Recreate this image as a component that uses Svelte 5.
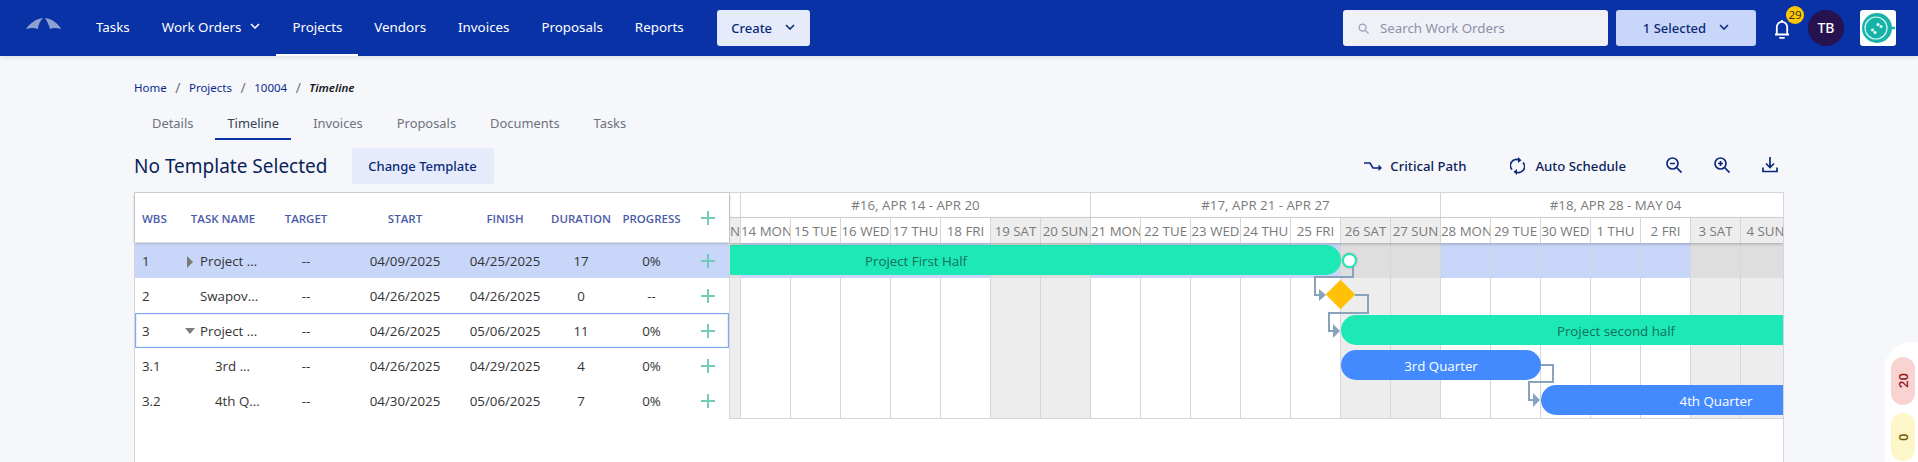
<script>
	const links = ['Tasks', 'Work Orders', 'Projects', 'Vendors', 'Invoices', 'Proposals', 'Reports'];
	const tabs = ['Details', 'Timeline', 'Invoices', 'Proposals', 'Documents', 'Tasks'];
	const crumbs = ['Home', 'Projects', '10004'];

	const tasks = [
		{ wbs: '1', name: 'Project ...', start: '04/09/2025', finish: '04/25/2025', duration: 17, progress: '0%', kind: 'closed' },
		{ wbs: '2', name: 'Swapov...', start: '04/26/2025', finish: '04/26/2025', duration: 0, progress: '--', kind: 'leaf' },
		{ wbs: '3', name: 'Project ...', start: '04/26/2025', finish: '05/06/2025', duration: 11, progress: '0%', kind: 'open' },
		{ wbs: '3.1', name: '3rd ...', start: '04/26/2025', finish: '04/29/2025', duration: 4, progress: '0%', kind: 'child' },
		{ wbs: '3.2', name: '4th Q...', start: '04/30/2025', finish: '05/06/2025', duration: 7, progress: '0%', kind: 'child' }
	];

	const weeks = ['#16, APR 14 - APR 20', '#17, APR 21 - APR 27', '#18, APR 28 - MAY 04'];
	const days = [
		'14 MON', '15 TUE', '16 WED', '17 THU', '18 FRI', '19 SAT', '20 SUN',
		'21 MON', '22 TUE', '23 WED', '24 THU', '25 FRI', '26 SAT', '27 SUN',
		'28 MON', '29 TUE', '30 WED', '1 THU', '2 FRI', '3 SAT', '4 SUN'
	];
	const isWeekend = (d) => d.includes('SAT') || d.includes('SUN');

	// day 0 is Apr 14, the first full column of the chart
	const dayW = 50;
	const origin = 11;
	const bars = [
		{ label: 'Project First Half', day: -5, len: 17, row: 0, kind: 'green' },
		{ label: 'Project second half', day: 12, len: 11, row: 2, kind: 'green' },
		{ label: '3rd Quarter', day: 12, len: 4, row: 3, kind: 'blue' },
		{ label: '4th Quarter', day: 16, len: 7, row: 4, kind: 'blue' }
	];
</script>

<header class="nav">
	<div class="brand">
		<svg width="36" height="12" viewBox="0 0 36 12" fill="#8fa1d1">
			<path d="M0 11 C4 5 10 1 17 0 C14 3 12 7 12 11 C8 9.500 4 10 0 11Z" />
			<path d="M19 0 C26 1 32 5 35 11 C31 10 27 9.500 24 11 C23 7 21 3 19 0Z" />
		</svg>
	</div>
	{#each links as link}
		<a class="link" class:active={link === 'Projects'} href="#top">
			{link}
			{#if link === 'Work Orders'}
				<svg class="chev" width="10" height="6" viewBox="0 0 10 6"><path d="M1 1l4 4 4-4" /></svg>
			{/if}
		</a>
	{/each}
	<button class="create">
		Create
		<svg class="chev" width="10" height="6" viewBox="0 0 10 6"><path d="M1 1l4 4 4-4" /></svg>
	</button>

	<div class="nav-right">
		<label class="search">
			<svg width="11" height="11" viewBox="0 0 12 12" fill="none" stroke="#9a9fb5" stroke-width="1.400">
				<circle cx="5" cy="5" r="3.800" /><path d="M8 8l3.500 3.500" />
			</svg>
			<span>Search Work Orders</span>
		</label>
		<button class="selected">
			1 Selected
			<svg class="chev" width="10" height="6" viewBox="0 0 10 6"><path d="M1 1l4 4 4-4" /></svg>
		</button>
		<div class="bell">
			<svg width="16" height="20" viewBox="0 0 16 20" fill="none" stroke="#fff" stroke-width="1.800">
				<path d="M1 15.500h14M2.800 15.500V8a5.200 5.200 0 0 1 10.400 0v7.500" />
				<path d="M6 18.800h4" stroke-linecap="round" />
				<path d="M8 1v1.500" />
			</svg>
			<span class="badge">29</span>
		</div>
		<div class="avatar">TB</div>
		<div class="tile">
			<svg width="36" height="36" viewBox="0 0 36 36" fill="none">
				<path d="M29 18h6" stroke="#17b3a8" stroke-width="2.500" />
				<circle cx="17" cy="18" r="15" fill="#17b3a8" />
				<circle cx="16" cy="18" r="11" stroke="#d8f7f3" stroke-width="1.200" />
				<circle cx="18" cy="14.500" r="1.500" fill="#f2fffd" />
				<circle cx="21" cy="16.500" r="1.500" fill="#f2fffd" />
				<circle cx="12.500" cy="20" r="1.500" fill="#f2fffd" />
				<circle cx="15" cy="22.500" r="1.500" fill="#f2fffd" />
			</svg>
		</div>
	</div>
</header>

<main class="page">
	<nav class="crumbs">
		{#each crumbs as crumb}
			<a href="#top">{crumb}</a><span class="sep">/</span>
		{/each}
		<em>Timeline</em>
	</nav>

	<div class="tabs">
		{#each tabs as tab}
			<span class="tab" class:current={tab === 'Timeline'}>{tab}</span>
		{/each}
	</div>

	<div class="titlebar">
		<h1>No Template Selected</h1>
		<button class="change">Change Template</button>
		<div class="tools">
			<span class="tool">
				<svg width="19" height="10" viewBox="0 0 19 10" fill="none" stroke="#0b2a78" stroke-width="1.600">
					<path d="M0 2h6l3 5h8" /><path d="M14.500 3.500L18 7l-3.500 3" fill="#0b2a78" stroke="none" />
				</svg>
				Critical Path
			</span>
			<span class="tool sched">
				<svg width="15" height="18" viewBox="0 0 15 18" fill="none" stroke="#0b2a78" stroke-width="1.700">
					<path d="M2 12.500A6 6 0 0 1 9.500 3.300" />
					<path d="M13 5.500A6 6 0 0 1 5.500 14.700" />
					<path d="M8 0l3.500 3.200L8 6" fill="#0b2a78" stroke="none" />
					<path d="M7 12l-3.500 2.800L7 18" fill="#0b2a78" stroke="none" />
				</svg>
				Auto Schedule
			</span>
			<svg class="icon" width="16" height="16" viewBox="0 0 16 16" fill="none" stroke="#0b2a78" stroke-width="1.700">
				<circle cx="6.500" cy="6.500" r="5.500" /><path d="M10.500 10.500L15.500 15.500M4 6.500h5" />
			</svg>
			<svg class="icon" width="16" height="16" viewBox="0 0 16 16" fill="none" stroke="#0b2a78" stroke-width="1.700">
				<circle cx="6.500" cy="6.500" r="5.500" /><path d="M10.500 10.500L15.500 15.500M4 6.500h5M6.500 4v5" />
			</svg>
			<svg class="icon last" width="16" height="16" viewBox="0 0 16 16" fill="none" stroke="#0b2a78" stroke-width="1.700">
				<path d="M8 0v10M4 6.500L8 10.500l4-4M1 10.500v4h14v-4" />
			</svg>
		</div>
	</div>

	<section class="gantt">
		<div class="pane">
			<div class="row head">
				<span class="wbs">WBS</span>
				<span class="mid">TASK NAME</span>
				<span class="mid">TARGET</span>
				<span class="mid">START</span>
				<span class="mid">FINISH</span>
				<span class="mid">DURATION</span>
				<span class="mid">PROGRESS</span>
				<span class="plus"></span>
			</div>
			{#each tasks as task, i}
				<div class="row" class:picked={i === 0} class:focused={i === 2}>
					<span class="wbs">{task.wbs}</span>
					<span class="name {task.kind}">
						{#if task.kind === 'closed' || task.kind === 'open'}<i class="caret"></i>{/if}
						{task.name}
					</span>
					<span class="mid">--</span>
					<span class="mid">{task.start}</span>
					<span class="mid">{task.finish}</span>
					<span class="mid">{task.duration}</span>
					<span class="mid">{task.progress}</span>
					<span class="plus"></span>
				</div>
			{/each}
		</div>

		<div class="chart">
			<div class="weeks">
				<span class="stub"></span>
				{#each weeks as week}
					<span class="week">{week}</span>
				{/each}
			</div>
			<div class="days">
				<span class="day stub off"><b>13 SUN</b></span>
				{#each days as day}
					<span class="day" class:off={isWeekend(day)}>{day}</span>
				{/each}
			</div>
			<div class="canvas">
				<div class="col stub off">
					{#each tasks as _, i}<span class:on={i === 0}></span>{/each}
				</div>
				{#each days as day}
					<div class="col" class:off={isWeekend(day)}>
						{#each tasks as _, i}<span class:on={i === 0}></span>{/each}
					</div>
				{/each}

				{#each bars as bar}
					<div
						class="bar {bar.kind}"
						style="left: {origin + bar.day * dayW}px; width: {bar.len * dayW}px; top: {2 + bar.row * 35}px"
					>
						{bar.label}
					</div>
				{/each}

				<span class="knob"></span>
				<span class="mile"></span>
				<svg class="links" width="1054" height="175" viewBox="0 0 1054 175" fill="none">
					<g stroke="#8aa3bd" stroke-width="2">
						<path d="M623 24v10H585v18h5" />
						<path d="M625 52h13v18H599v18h5" />
						<path d="M811 122h12v17H799v18h4" />
					</g>
					<g fill="#8aa3bd">
						<path d="M589 46l7 6-7 6z" />
						<path d="M603 81l7 7-7 7z" />
						<path d="M803 150l7 7-7 7z" />
					</g>
				</svg>
			</div>
		</div>
	</section>
</main>

<aside class="counts">
	<span class="count red">20</span>
	<span class="count yellow">0</span>
</aside>

<style>
	:global(body) {
		margin: 0;
		height: 462px;
		overflow: hidden;
		background: #f6f7fb;
		font-family: 'Noto Sans', sans-serif;
	}

	button {
		font: inherit;
		border: 0;
		cursor: pointer;
	}

	a {
		text-decoration: none;
		color: inherit;
	}

	.nav {
		display: flex;
		align-items: center;
		height: 56px;
		padding-right: 22px;
		background: #0832a5;
		box-shadow: 0 1px 5px rgba(0, 0, 0, 0.12);
		font-size: 13.350px;
		position: relative;
		z-index: 2;
	}

	.brand {
		width: 80px;
		padding: 0 0 6px 26px;
		box-sizing: border-box;
	}

	.link {
		display: flex;
		align-items: center;
		gap: 9px;
		height: 56px;
		padding: 0 16px;
		box-sizing: border-box;
		color: #fff;
		border-bottom: 2px solid transparent;
	}

	.link.active {
		border-bottom-color: #fff;
	}

	.chev {
		fill: none;
		stroke: currentColor;
		stroke-width: 1.600;
		margin-top: -2px;
	}

	.create {
		display: flex;
		align-items: center;
		justify-content: center;
		gap: 13px;
		width: 93px;
		height: 36px;
		margin-left: 17px;
		border-radius: 3px;
		background: #e6ebfc;
		color: #0b2a78;
		font-weight: 500;
		font-size: 13px;
	}

	.nav-right {
		display: flex;
		align-items: center;
		margin-left: auto;
	}

	.search {
		display: flex;
		align-items: center;
		gap: 11px;
		width: 265px;
		height: 36px;
		padding-left: 15px;
		box-sizing: border-box;
		border-radius: 3px;
		background: #f0f1f8;
		color: #8c90a8;
		font-size: 13.300px;
	}

	.selected {
		display: flex;
		align-items: center;
		justify-content: center;
		gap: 13px;
		width: 140px;
		height: 36px;
		margin-left: 8px;
		border-radius: 3px;
		background: #c8d6f9;
		color: #0b2a78;
		font-weight: 500;
		font-size: 13px;
	}

	.bell {
		position: relative;
		width: 16px;
		height: 20px;
		margin: 0 18px;
		top: 1px;
	}

	.badge {
		position: absolute;
		left: 12px;
		top: -13px;
		width: 18px;
		height: 18px;
		border-radius: 50%;
		background: #ffc800;
		color: #333;
		font-size: 11.500px;
		line-height: 18px;
		text-align: center;
	}

	.avatar {
		width: 36px;
		height: 36px;
		border-radius: 50%;
		background: #26124f;
		color: #fff;
		font-weight: 500;
		font-size: 14px;
		line-height: 36px;
		text-align: center;
	}

	.tile {
		width: 36px;
		height: 36px;
		margin-left: 16px;
		border-radius: 3px;
		background: #fff;
	}

	.page {
		padding: 23px 134px 0;
	}

	.crumbs {
		display: flex;
		align-items: center;
		height: 16px;
		font-size: 11.500px;
		color: #0b2a8f;
	}

	.sep {
		margin: 0 8.500px;
		font-size: 14px;
		color: #6d7280;
	}

	.crumbs em {
		font-weight: 600;
		color: #14161c;
	}

	.tabs {
		display: flex;
		height: 29px;
		margin-top: 16px;
		padding-left: 6px;
		font-size: 12.900px;
		color: #6d7280;
	}

	.tab {
		height: 27px;
		line-height: 24px;
		padding: 0 12px;
		margin-right: 10px;
		border-bottom: 2px solid transparent;
	}

	.tab.current {
		color: #374151;
		border-bottom-color: #0832a5;
	}

	.titlebar {
		display: flex;
		align-items: center;
		height: 36px;
		margin-top: 8px;
	}

	h1 {
		margin: 0;
		font-size: 19px;
		font-weight: 400;
		color: #0b2358;
	}

	.change {
		height: 36px;
		width: 142px;
		margin-left: 24px;
		border-radius: 3px;
		background: #e6ebfc;
		color: #0b2a78;
		font-weight: 500;
		font-size: 13px;
	}

	.tools {
		display: flex;
		align-items: center;
		margin-left: auto;
		padding-right: 6px;
		color: #0b2358;
		font-weight: 500;
		font-size: 13.200px;
	}

	.tool {
		display: flex;
		align-items: center;
		gap: 7px;
		margin-right: 44px;
	}

	.tool.sched {
		gap: 10px;
		margin-right: 40px;
	}

	.icon {
		margin-left: 32px;
		margin-top: -2px;
	}

	.icon.last {
		margin-left: 32px;
	}

	.tool + .icon {
		margin-left: 0;
	}

	.gantt {
		display: flex;
		height: 270px;
		margin-top: 8px;
		background: #fff;
		border: 1px solid #d6d6d6;
		border-bottom: 0;
		font-family: 'Open Sans', sans-serif;
		font-size: 13.300px;
		color: #333;
	}

	.pane {
		width: 594px;
		flex: none;
	}

	.row {
		display: grid;
		grid-template-columns: 40px 96px 70px 128px 72px 80px 61px 47px;
		align-items: center;
		height: 35px;
		box-sizing: border-box;
	}

	.row.head {
		height: 49px;
		padding-top: 1px;
		font-size: 11.500px;
		font-weight: 600;
		color: #4b5aa7;
		box-shadow: 0 1px 3px rgba(0, 0, 0, 0.25);
		position: relative;
	}

	.row.picked {
		background: #c8d6f9;
		margin-top: 1px;
	}

	.row.focused {
		outline: 1px solid #7fa9f5;
		outline-offset: -1px;
		box-shadow: inset 0 0 0 2px #e6efff;
	}

	.wbs {
		padding-left: 7px;
	}

	.mid {
		text-align: center;
	}

	.name {
		display: flex;
		align-items: center;
		padding-left: 25px;
		position: relative;
	}

	.name.child {
		padding-left: 40px;
	}

	.caret {
		position: absolute;
		left: 12px;
		top: 4px;
		width: 0;
		height: 0;
		border-style: solid;
		border-width: 6px 0 6px 6px;
		border-color: transparent transparent transparent #7b7b7b;
	}

	.open .caret {
		left: 10px;
		top: 6px;
		border-width: 6px 5px 0;
		border-color: #7b7b7b transparent transparent;
	}

	.plus {
		position: relative;
		height: 14px;
		margin-left: 19px;
		width: 14px;
		background:
			linear-gradient(#6fcdb8, #6fcdb8) center / 14px 2px no-repeat,
			linear-gradient(#6fcdb8, #6fcdb8) center / 2px 14px no-repeat;
	}

	.chart {
		flex: 1;
		min-width: 0;
		height: 226px;
		overflow: hidden;
		border-left: 1px solid #d6d6d6;
		color: #7a7a7a;
	}

	.weeks {
		display: grid;
		grid-template-columns: 11px 350px 350px 350px;
		height: 24px;
		line-height: 25px;
		border-bottom: 1px solid #d6d6d6;
		text-align: center;
	}

	.weeks .stub {
		border-right: 1px solid #d6d6d6;
	}

	.week {
		border-right: 1px solid #d6d6d6;
		box-sizing: border-box;
	}

	.days {
		display: grid;
		grid-template-columns: 11px repeat(21, 50px);
		height: 25px;
		line-height: 26px;
		box-shadow: 0 1px 3px rgba(0, 0, 0, 0.25);
		position: relative;
		z-index: 1;
	}

	.day {
		display: block;
		overflow: hidden;
		white-space: nowrap;
		text-align: center;
		border-right: 1px solid #d6d6d6;
		box-sizing: border-box;
	}

	.day.stub {
		display: flex;
		justify-content: flex-end;
	}

	.day b {
		font-weight: 400;
		flex: none;
	}

	.off {
		background: #ededed;
	}

	.canvas {
		display: grid;
		grid-template-columns: 11px repeat(21, 50px);
		position: relative;
		height: 175px;
		border-bottom: 1px solid #d6d6d6;
	}

	.col {
		display: flex;
		flex-direction: column;
		border-right: 1px solid #d6d6d6;
		box-sizing: border-box;
	}

	.col span {
		height: 35px;
	}

	.col span.on {
		background: #c8d6f9;
	}

	.col.off span.on {
		background: #dedede;
	}

	.bar {
		position: absolute;
		height: 30px;
		border-radius: 15px;
		line-height: 32px;
		text-align: center;
		white-space: nowrap;
	}

	.bar.green {
		background: #1de9b6;
		color: #11705c;
	}

	.bar.blue {
		background: #448aff;
		color: #fff;
	}

	.knob {
		position: absolute;
		left: 612px;
		top: 10px;
		width: 11px;
		height: 11px;
		border: 2px solid #1de9b6;
		border-radius: 50%;
		background: #fff;
		box-shadow: 0 0 2px rgba(0, 0, 0, 0.3);
	}

	.mile {
		position: absolute;
		left: 600px;
		top: 41px;
		width: 21px;
		height: 21px;
		background: #ffc107;
		transform: rotate(45deg);
	}

	.links {
		position: absolute;
		left: 0;
		top: 0;
		pointer-events: none;
	}

	.counts {
		position: fixed;
		right: 0;
		top: 342px;
		display: flex;
		flex-direction: column;
		gap: 8px;
		width: 33px;
		height: 120px;
		padding: 15px 3px 0 6px;
		box-sizing: border-box;
		border-radius: 26px 0 0 0;
		background: #fff;
	}

	.count {
		display: flex;
		align-items: center;
		justify-content: center;
		flex: none;
		width: 24px;
		height: 48px;
		border-radius: 12px;
		font-size: 13px;
		font-weight: 500;
		font-family: 'Roboto', sans-serif;
		writing-mode: vertical-rl;
		transform: rotate(180deg);
	}

	.red {
		background: #f9d2d2;
		color: #8c1515;
	}

	.yellow {
		background: #fdf6c8;
		color: #6a5a00;
	}
</style>
